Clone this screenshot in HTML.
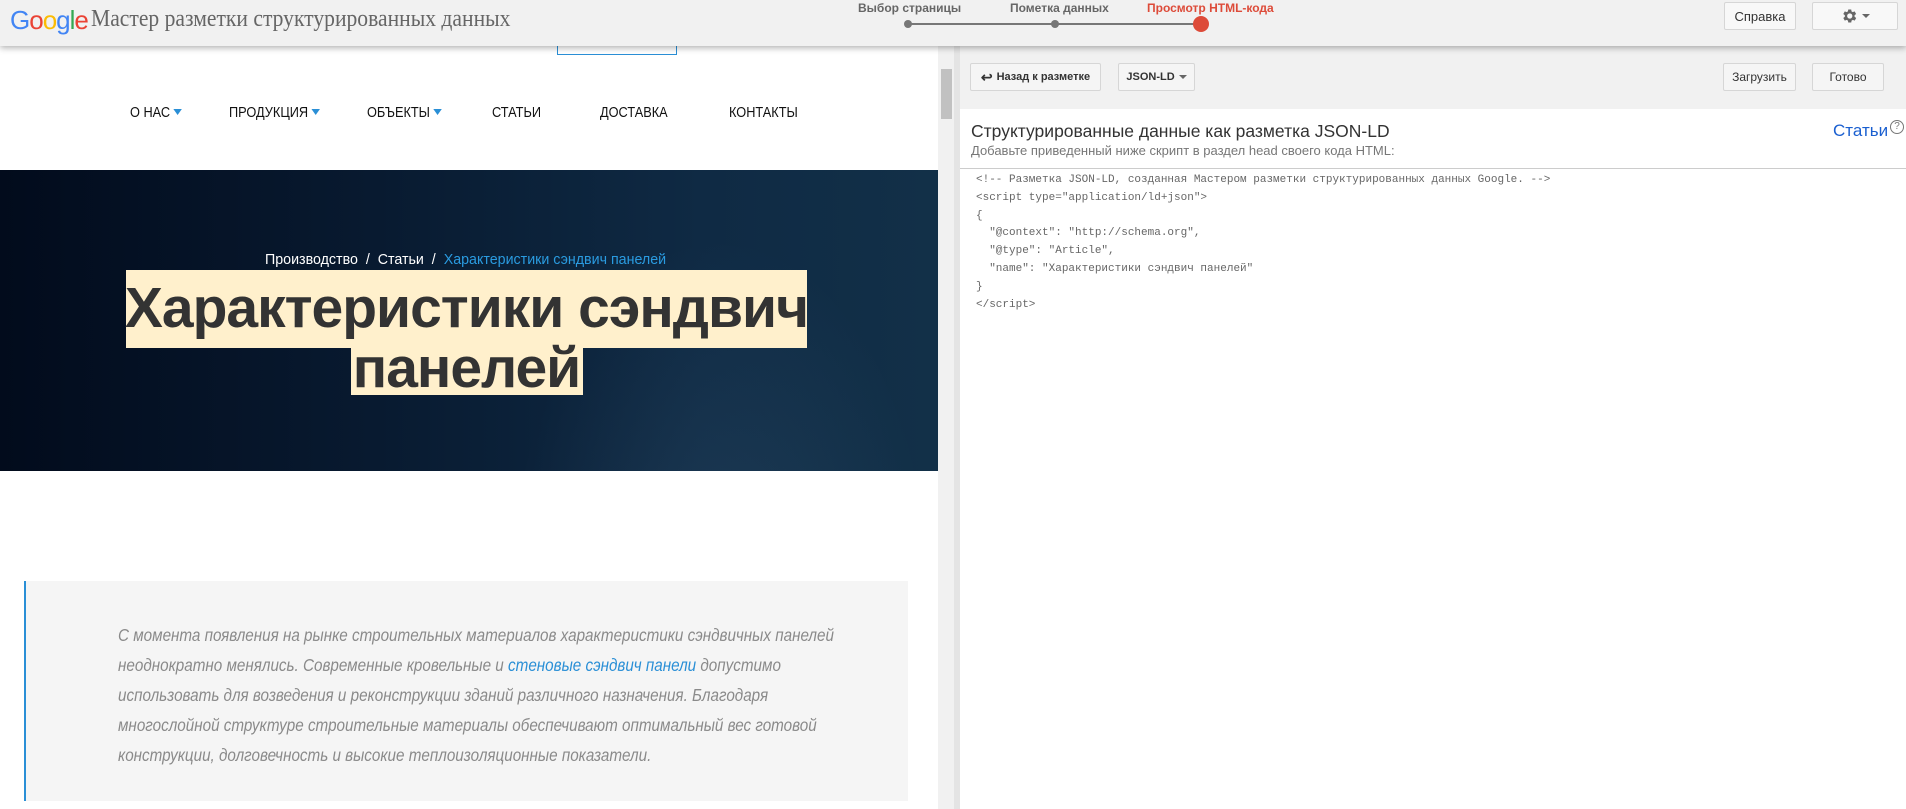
<!DOCTYPE html>
<html><head><meta charset="utf-8">
<style>
*{margin:0;padding:0;box-sizing:border-box}
body{width:1906px;height:809px;overflow:hidden;background:#fff;font-family:"Liberation Sans",Arial,sans-serif;position:relative}
.abs{position:absolute}
.sx{transform-origin:left top}
#hdr{left:0;top:0;width:1906px;height:46px;background:#f1f1f1;box-shadow:0 2px 6px rgba(0,0,0,.3);z-index:5}
.btn{position:absolute;background:#f5f5f5;border:1px solid #d6d6d6;border-radius:2px;font-size:12px;color:#333;display:flex;align-items:center;justify-content:center;font-weight:bold}
.tri{display:inline-block;width:0;height:0;border-left:4px solid transparent;border-right:4px solid transparent;border-top:4px solid #666;margin-left:4px}
.nav{position:absolute;top:104px;font-size:15px;color:#111;white-space:nowrap;transform:scaleX(.85);transform-origin:left top}
.nav .bt{display:inline-block;width:0;height:0;border-left:5px solid transparent;border-right:5px solid transparent;border-top:6px solid #2a8fd6;margin-left:4px;vertical-align:2px}
.code{position:absolute;left:976px;font-family:"Liberation Mono",monospace;font-size:11px;color:#666;white-space:pre}
.bq{position:absolute;left:118px;font-size:17.5px;font-style:italic;color:#8a8a8a;white-space:nowrap;transform:scaleX(.87);transform-origin:left top}
</style></head><body>
<div id="hdr" class="abs">
  <div class="abs" style="left:10px;top:5px;font-size:26px;letter-spacing:-1px"><span style="color:#4285f4">G</span><span style="color:#ea4335">o</span><span style="color:#fbbc05">o</span><span style="color:#4285f4">g</span><span style="color:#34a853">l</span><span style="color:#ea4335">e</span></div>
  <div class="abs sx" style="left:91px;top:6px;font-family:'Liberation Serif',serif;font-size:24px;color:#666;white-space:nowrap;transform:scaleX(.9)">Мастер разметки структурированных данных</div>
  <div class="abs" style="left:858px;top:1px;font-size:12px;color:#666;font-weight:bold">Выбор страницы</div>
  <div class="abs" style="left:1010px;top:1px;font-size:12px;color:#666;font-weight:bold">Пометка данных</div>
  <div class="abs" style="left:1147px;top:1px;font-size:12px;color:#dd4b39;font-weight:bold">Просмотр HTML-кода</div>
  <div class="abs" style="left:908px;top:23px;width:293px;height:2px;background:#777"></div>
  <div class="abs" style="left:904px;top:20px;width:8px;height:8px;border-radius:50%;background:#777"></div>
  <div class="abs" style="left:1051px;top:20px;width:8px;height:8px;border-radius:50%;background:#777"></div>
  <div class="abs" style="left:1193px;top:16px;width:16px;height:16px;border-radius:50%;background:#dd4b39"></div>
  <div class="btn" style="left:1724px;top:2px;width:72px;height:28px;font-size:13px;font-weight:normal;background:#f8f8f8">Справка</div>
  <div class="btn" style="left:1812px;top:2px;width:86px;height:28px;background:#f8f8f8"><svg width="18" height="18" viewBox="0 0 24 24"><path fill="#666" d="M19.4 13a7.5 7.5 0 0 0 0-2l2.1-1.6-2-3.5-2.5 1a7.4 7.4 0 0 0-1.7-1L15 3.3h-4l-.4 2.6a7.4 7.4 0 0 0-1.7 1l-2.5-1-2 3.5L6.5 11a7.5 7.5 0 0 0 0 2l-2.1 1.6 2 3.5 2.5-1c.5.4 1.1.8 1.7 1l.4 2.6h4l.4-2.6c.6-.2 1.2-.6 1.7-1l2.5 1 2-3.5zM13 15.5a3.5 3.5 0 1 1 0-7 3.5 3.5 0 0 1 0 7z"/></svg><span class="tri"></span></div>
</div>

<div class="abs" style="left:557px;top:40px;width:120px;height:15px;border:1px solid #2a8fd6;border-top:none"></div>
<div class="nav" style="left:130px">О НАС<span class="bt"></span></div>
<div class="nav" style="left:229px">ПРОДУКЦИЯ<span class="bt"></span></div>
<div class="nav" style="left:367px">ОБЪЕКТЫ<span class="bt"></span></div>
<div class="nav" style="left:492px">СТАТЬИ</div>
<div class="nav" style="left:600px">ДОСТАВКА</div>
<div class="nav" style="left:729px">КОНТАКТЫ</div>

<div class="abs" style="left:0;top:170px;width:938px;height:301px;background:radial-gradient(ellipse 300px 500px at 720px 420px,rgba(90,130,160,.18),transparent 70%),linear-gradient(90deg,#020b1c 0%,#081a30 40%,#0f2a44 75%,#123048 100%)"></div>
<div class="abs sx" style="left:265px;top:251px;font-size:15px;color:#fff;white-space:nowrap;transform:scaleX(.95)">Производство &nbsp;/&nbsp; Статьи &nbsp;/&nbsp; <span style="color:#2a9be0">Характеристики сэндвич панелей</span></div>
<div class="abs" style="left:126px;top:270px;width:681px;height:78px;background:#fff0cc"></div>
<div class="abs" style="left:351px;top:348px;width:232px;height:47px;background:#fff0cc"></div>
<div class="abs" style="left:96px;top:270px;width:741px;text-align:center;font-size:57px;font-weight:bold;color:#333;line-height:60px;padding-top:8px;letter-spacing:-1px;white-space:nowrap">Характеристики сэндвич<br>панелей</div>

<div class="abs" style="left:24px;top:581px;width:884px;height:220px;background:#f5f5f5;border-left:2px solid #2a8fd6"></div>
<div class="bq" style="top:625px">С момента появления на рынке строительных материалов характеристики сэндвичных панелей</div>
<div class="bq" style="top:655px">неоднократно менялись. Современные кровельные и <span style="color:#2a8fd6">стеновые сэндвич панели</span> допустимо</div>
<div class="bq" style="top:685px">использовать для возведения и реконструкции зданий различного назначения. Благодаря</div>
<div class="bq" style="top:715px">многослойной структуре строительные материалы обеспечивают оптимальный вес готовой</div>
<div class="bq" style="top:745px">конструкции, долговечность и высокие теплоизоляционные показатели.</div>

<div class="abs" style="left:938px;top:46px;width:16px;height:763px;background:#f1f1f1"></div>
<div class="abs" style="left:941px;top:69px;width:11px;height:50px;background:#c1c1c1"></div>
<div class="abs" style="left:954px;top:46px;width:6px;height:763px;background:#e4e4e4"></div>

<div class="abs" style="left:960px;top:46px;width:946px;height:63px;background:#f1f1f1"></div>
<div class="btn" style="left:970px;top:63px;width:131px;height:28px;font-size:11px"><span style="font-size:14px;margin-right:4px">↩</span>Назад к разметке</div>
<div class="btn" style="left:1118px;top:63px;width:77px;height:28px;font-size:11px">JSON-LD<span class="tri"></span></div>
<div class="btn" style="left:1723px;top:63px;width:73px;height:28px;font-size:12px;font-weight:normal">Загрузить</div>
<div class="btn" style="left:1812px;top:63px;width:72px;height:28px;font-size:12px;font-weight:normal">Готово</div>
<div class="abs" style="left:971px;top:121px;font-size:17.5px;color:#333;white-space:nowrap">Структурированные данные как разметка JSON-LD</div>
<div class="abs" style="left:971px;top:143px;font-size:13px;color:#777">Добавьте приведенный ниже скрипт в раздел head своего кода HTML:</div>
<div class="abs" style="left:1833px;top:121px;font-size:17px;color:#1a5fd0">Статьи</div>
<div class="abs" style="left:1890px;top:120px;width:14px;height:14px;border:1px solid #777;border-radius:50%;font-size:10px;color:#777;text-align:center;line-height:12px">?</div>
<div class="abs" style="left:960px;top:168px;width:946px;height:1px;background:#ccc"></div>
<div class="code" style="top:174px">&lt;!-- Разметка JSON-LD, созданная Мастером разметки структурированных данных Google. --&gt;</div>
<div class="code" style="top:192px">&lt;script type="application/ld+json"&gt;</div>
<div class="code" style="top:210px">{</div>
<div class="code" style="top:227px">  "@context": "http://schema.org",</div>
<div class="code" style="top:245px">  "@type": "Article",</div>
<div class="code" style="top:263px">  "name": "Характеристики сэндвич панелей"</div>
<div class="code" style="top:281px">}</div>
<div class="code" style="top:299px">&lt;/script&gt;</div>
</body></html>
